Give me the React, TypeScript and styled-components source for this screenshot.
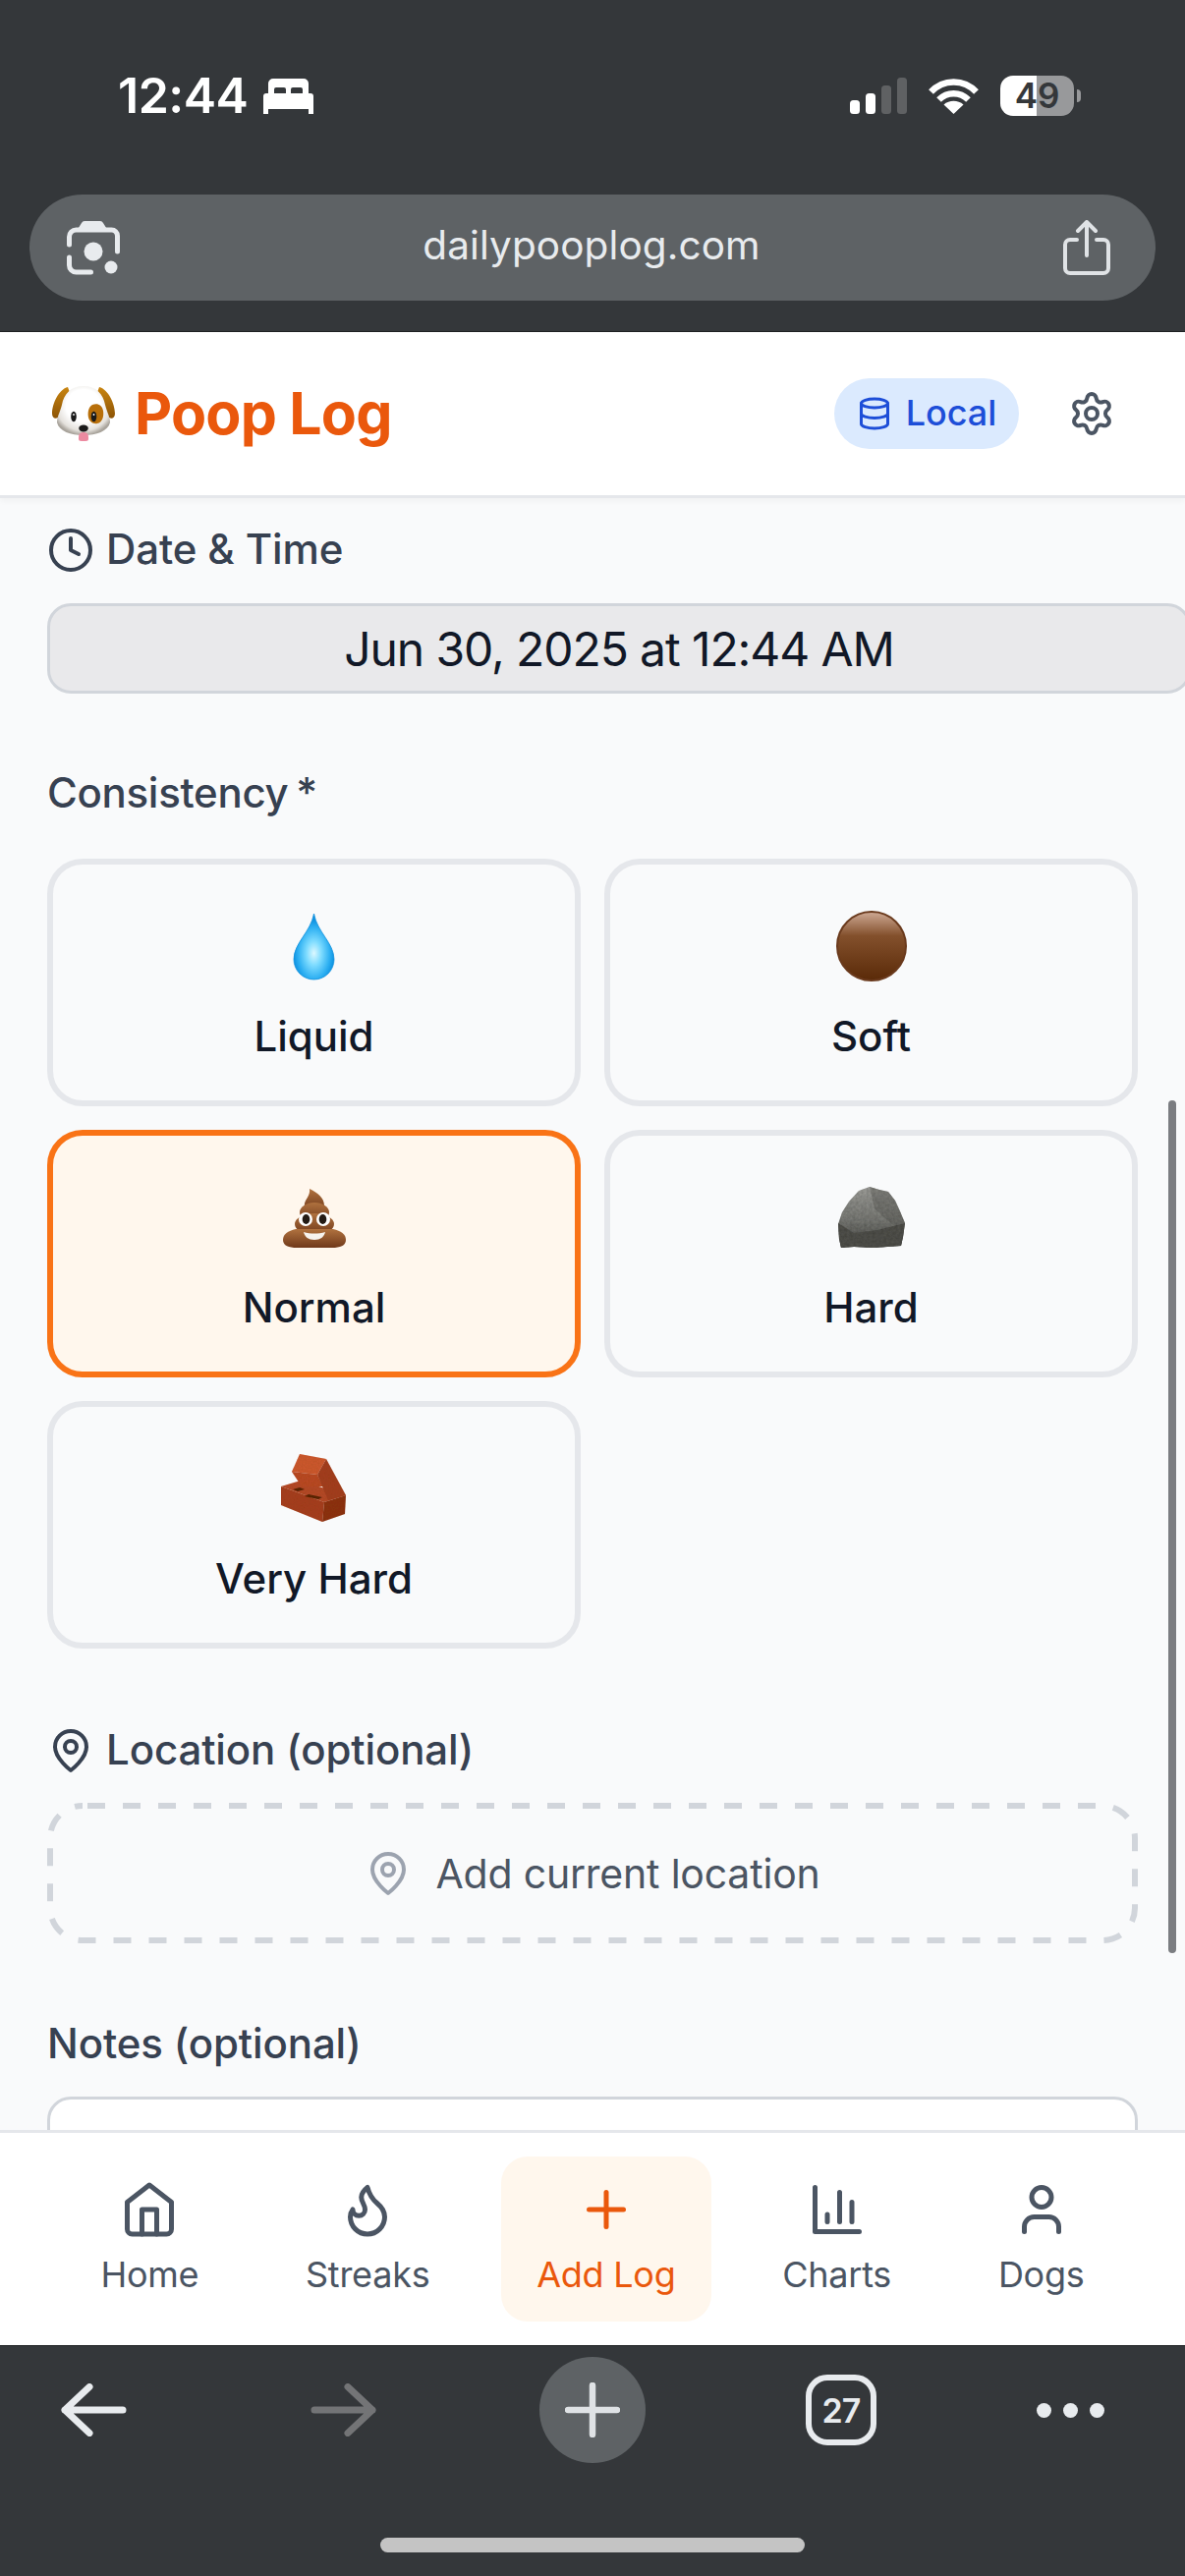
import React from "react";
import styled, { createGlobalStyle } from "styled-components";
import { Clock, Database, Flame, Plus, Settings, User } from "lucide-react";

const Global = createGlobalStyle`
  html, body { margin: 0; padding: 0; background: #34373a; }
  * { box-sizing: border-box; }
  body { font-family: Inter, "Liberation Sans", sans-serif; -webkit-font-smoothing: antialiased; }
`;

const Phone = styled.div`
  width: 1206px; height: 2622px; display: flex; flex-direction: column; overflow: hidden; background: #f9fafb; position: relative;
`;
const TopChrome = styled.div`
  height: 338px; flex: none; background: #34373a; padding-top: 77px; border-bottom: 1px solid #1f2123;
`;
const StatusRow = styled.div`
  height: 41px; display: flex; align-items: center; justify-content: space-between; padding: 0 113px 0 120px;
`;
const StatusLeft = styled.div`display: flex; align-items: center; gap: 16px;`;
const Time = styled.span`font-size: 50px; line-height: 41px; font-weight: 600; color: #fff; letter-spacing: -0.5px;`;
const StatusRight = styled.div`display: flex; align-items: center; gap: 22px;`;
const Battery = styled.div`
  position: relative; width: 75px; height: 41px; border-radius: 13px;
  background: linear-gradient(90deg, #fff 49%, #98999b 49%);
  color: #34373a; font-size: 35px; font-weight: 600; display: flex; align-items: center; justify-content: center; line-height: 41px;
  &::after { content: ""; position: absolute; left: 78px; top: 14px; width: 4px; height: 13px; border-radius: 0 4px 4px 0; background: #98999b; }
`;
const UrlBar = styled.div`
  margin: 80px 30px 0 30px; height: 108px; border-radius: 54px; background: #5e6265;
  display: flex; align-items: center; justify-content: space-between; padding: 0 46px 0 38px;
`;
const UrlText = styled.span`font-size: 40.500px; color: #e8ebee; letter-spacing: 0.1px; margin-bottom: 6px;`;

const Header = styled.header`
  height: 169px; flex: none; background: #fff; border-bottom: 3px solid #e5e7eb; box-shadow: 0 3px 6px rgba(0,0,0,0.04);
  display: flex; align-items: center; justify-content: space-between; padding: 0 71px 0 53px; position: relative; z-index: 1;
`;
const Brand = styled.div`display: flex; align-items: center; gap: 20px;`;
const Title = styled.h1`margin: 0; font-size: 59px; line-height: 72px; font-weight: 700; color: #ea580c; letter-spacing: -0.8px;`;
const HeaderActions = styled.div`display: flex; align-items: center; gap: 50px;`;
const Badge = styled.div`
  height: 72px; width: 188px; border-radius: 36px; background: #dbeafe; color: #1d4ed8;
  display: flex; align-items: center; justify-content: center; gap: 14px; font-size: 36px; font-weight: 500;
`;
const BadgeText = styled.span`margin-bottom: 3px;`;

const Main = styled.main`
  flex: 1; min-height: 0; overflow: hidden; padding: 23px 48px 0; position: relative;
`;
const Label = styled.div<{ $top?: number; $tight?: boolean }>`
  display: flex; align-items: center; gap: 12px; height: 60px; margin-top: ${p => p.$top ?? 0}px;
  font-size: 42px; font-weight: 500; color: #374151; letter-spacing: ${p => (p.$tight ? "-0.3px" : "-0.12px")};
  word-spacing: ${p => (p.$tight ? "-3px" : "0")};
`;
const LabelText = styled.span`margin-bottom: 3px;`;
const DateField = styled.div`
  margin-top: 24px; width: 1164px; height: 92px; border: 3px solid #d1d5db; border-radius: 24px; background: #e9e9eb;
  display: flex; align-items: center; justify-content: center; font-size: 48px; color: #111827; letter-spacing: -1.1px;
`;
const Grid = styled.div`
  margin-top: 36px; display: grid; grid-template-columns: 1fr 1fr; gap: 24px;
`;
const Card = styled.div<{ $on?: boolean }>`
  height: 252px; border: 6px solid ${p => (p.$on ? "#f97316" : "#e5e7eb")}; border-radius: 36px; background: ${p => (p.$on ? "#fff7ed" : "transparent")};
  display: flex; flex-direction: column; align-items: center; padding-top: 47px;
`;
const CardLabel = styled.span`margin-top: 26px; font-size: 42px; line-height: 60px; font-weight: 500; color: #111827;`;
const DashedButton = styled.div`
  position: relative; margin-top: 23px; height: 143px;
  display: flex; align-items: center; justify-content: center; gap: 24px; font-size: 41px; color: #4b5563; letter-spacing: -0.2px;
`;
const DashFrame = styled.svg`position: absolute; left: 0; top: 0;`;
const TextArea = styled.div`
  margin-top: 23px; height: 160px; border: 3px solid #d1d5db; border-radius: 24px; background: #fff;
`;
const ScrollThumb = styled.div`
  position: absolute; left: 1189px; top: 613px; width: 8px; height: 868px; border-radius: 4px; background: #7b7d81;
`;

const Nav = styled.nav`
  flex: none; background: #fff; border-top: 3px solid #e5e7eb; padding: 24px 48px; display: flex; justify-content: space-around; position: relative;
`;
const NavItem = styled.div<{ $on?: boolean }>`
  height: 168px; padding: 24px 36px; border-radius: 27px; display: flex; flex-direction: column; align-items: center; gap: 12px;
  background: ${p => (p.$on ? "#fff7ed" : "transparent")}; color: ${p => (p.$on ? "#ea580c" : "#4b5563")};
`;
const NavLabel = styled.span`font-size: 36px; line-height: 48px; font-weight: 400; letter-spacing: -0.25px;`;

const BottomChrome = styled.div`
  flex: none; height: 235px; background: #34373a; border-top: 1px solid #1f2123; display: flex; flex-direction: column; align-items: center;
`;
const Toolbar = styled.div`
  align-self: stretch; display: flex; align-items: center; height: 108px; margin-top: 11px; padding-left: 62px;
`;
const ToolSlot = styled.div<{ $gap: number }>`
  margin-left: ${p => p.$gap}px; display: flex; align-items: center; justify-content: center; flex: none;
`;
const NewTab = styled.div`
  width: 108px; height: 108px; border-radius: 50%; background: #5e6265; display: flex; align-items: center; justify-content: center;
`;
const Tabs = styled.div`
  width: 72px; height: 72px; border: 6px solid #e8ebee; border-radius: 22px; display: flex; align-items: center; justify-content: center;
  color: #e8ebee; font-size: 34px; font-weight: 600; letter-spacing: -1px;
`;
const Dots = styled.div`display: flex; gap: 12px;`;
const Dot = styled.span`width: 15px; height: 15px; border-radius: 50%; background: #e8ebee;`;
const HomeBar = styled.div`margin-top: 76px; width: 432px; height: 15px; border-radius: 8px; background: #c4c4c4;`;

const Bed = () => (
  <svg width="51" height="36" viewBox="0 0 51 36" fill="#fff">
    <path fillRule="evenodd" d="M5 5a5 5 0 0 1 5-5h31a5 5 0 0 1 5 5v12H5zM11 15v-4a2 2 0 0 1 2-2h8a2 2 0 0 1 2 2v4zM28 15v-4a2 2 0 0 1 2-2h8a2 2 0 0 1 2 2v4z" />
    <path d="M3 15h45a3 3 0 0 1 3 3v13H0V18a3 3 0 0 1 3-3z" />
    <path d="M0 30h5v6H0zM46 30h5v6h-5z" />
  </svg>
);
const Signal = () => (
  <svg width="58" height="37" viewBox="0 0 58 37">
    <rect x="0" y="23" width="10" height="14" rx="3.500" fill="#fff" />
    <rect x="16" y="16" width="10" height="21" rx="3.500" fill="#fff" />
    <rect x="32" y="8" width="10" height="29" rx="3.500" fill="#5f6163" />
    <rect x="48" y="0" width="10" height="37" rx="3.500" fill="#5f6163" />
  </svg>
);
const Wifi = () => (
  <svg width="51" height="37" viewBox="0 0 51 37" fill="none" stroke="#fff" strokeWidth="6.500">
    <path d="M2.500 14.500C15 1 36 1 48.500 14.500" />
    <path d="M10.500 22.500C19 14 32 14 40.500 22.500" />
    <path d="M25.500 37L15.500 27.500C21 22.500 30 22.500 35.500 27.500Z" fill="#fff" stroke="none" />
  </svg>
);
const Lens = () => (
  <svg width="54" height="55" viewBox="0 0 54 55" fill="none" stroke="#e8ebee" strokeWidth="5" strokeLinecap="round">
    <path d="M2.500 24v-8a7 7 0 0 1 7-7h36a6 6 0 0 1 6 6v16" />
    <path d="M2.500 37v8a7 7 0 0 0 7 7h15" />
    <path d="M10 10l5-8q1-2 3-2h16q2 0 3 2l5 8z" fill="#e8ebee" stroke="none" />
    <circle cx="27" cy="31" r="9.500" fill="#e8ebee" stroke="none" />
    <circle cx="45" cy="47" r="6.500" fill="#e8ebee" stroke="none" />
  </svg>
);
const Share = () => (
  <svg width="48" height="56" viewBox="0 0 48 56" fill="none" stroke="#e0e3e6" strokeWidth="4" strokeLinecap="round" strokeLinejoin="round">
    <path d="M24 36V3M15 11l9-9 9 9" />
    <path d="M14 20H7a5 5 0 0 0-5 5v24a5 5 0 0 0 5 5h34a5 5 0 0 0 5-5V25a5 5 0 0 0-5-5h-7" />
  </svg>
);
const Arrow = ({ flip, color }: { flip?: boolean; color: string }) => (
  <svg width="67" height="54" viewBox="0 0 67 54" fill="none" stroke={color} strokeWidth="7" strokeLinecap="round" strokeLinejoin="round">
    <g transform={flip ? "translate(67 0) scale(-1 1)" : undefined}>
      <path d="M4 27H63M29 3.500L4 27L29 50.500" />
    </g>
  </svg>
);
const LargePlus = () => (
  <svg width="56" height="56" viewBox="0 0 56 56" fill="none" stroke="#dfe2e5" strokeWidth="6.500" strokeLinecap="round">
    <path d="M28 3V53M3 28H53" />
  </svg>
);

const Line = { fill: "none", stroke: "currentColor", strokeWidth: 2, strokeLinecap: "round", strokeLinejoin: "round" } as const;
const OldHome = () => (
  <svg width="60" height="60" viewBox="0 0 24 24" {...Line}>
    <path d="m3 9 9-7 9 7v11a2 2 0 0 1-2 2H5a2 2 0 0 1-2-2z" />
    <polyline points="9 22 9 12 15 12 15 22" />
  </svg>
);
const OldChart = () => (
  <svg width="60" height="60" viewBox="0 0 24 24" {...Line}>
    <path d="M3 3v18h18M18 17V9M13 17V5M8 17v-3" />
  </svg>
);
const Pin = ({ color }: { color: string }) => (
  <svg width="48" height="48" viewBox="0 0 24 24" {...Line} style={{ color }}>
    <path d="M20 10c0 6-8 12-8 12s-8-6-8-12a8 8 0 0 1 16 0Z" />
    <circle cx="12" cy="10" r="3" />
  </svg>
);

const DogFace = () => (
  <svg width="64" height="56" viewBox="0 0 64 56">
    <defs>
      <radialGradient id="dogHead" cx="0.5" cy="0.4" r="0.6">
        <stop offset="0.55" stopColor="#ffffff" />
        <stop offset="0.85" stopColor="#e4e1dc" />
        <stop offset="1" stopColor="#a9a49c" />
      </radialGradient>
      <linearGradient id="dogEar" x1="0" y1="0" x2="0" y2="1">
        <stop offset="0" stopColor="#c98510" />
        <stop offset="1" stopColor="#8c5305" />
      </linearGradient>
    </defs>
    <path d="M16 1C7 3 0 18 0 28c0 4 3 6 6 4 6-3 11-12 14-20z" fill="url(#dogEar)" />
    <path d="M48 1c9 2 16 17 16 27 0 4-3 6-6 4-6-3-11-12-14-20z" fill="url(#dogEar)" />
    <path d="M32 0c13 0 20 8 22 19 2 8 5 12 5 18-2 9-14 13-27 13S7 46 5 37c0-6 3-10 5-18C12 8 19 0 32 0z" fill="url(#dogHead)" />
    <path d="M41 19c5-2 10 0 11 6 1 6-1 12-6 13-4 1-8-2-9-6-1-5 0-11 4-13z" fill="#b86f0a" />
    <ellipse cx="22" cy="31" rx="2.800" ry="5.200" fill="#1a1a1a" />
    <ellipse cx="42.500" cy="31" rx="2.800" ry="5.200" fill="#1a1a1a" />
    <circle cx="22" cy="29" r="0.900" fill="#fff" />
    <circle cx="42.500" cy="29" r="0.900" fill="#fff" />
    <path d="M27 54c0-4 0-7 5-7s5 3 5 7c0 2-2 2-5 2s-5 0-5-2z" fill="#ec8aa0" />
    <ellipse cx="32" cy="43" rx="4.800" ry="3.400" fill="#1b1b1b" />
  </svg>
);
const Drop = () => (
  <svg width="72" height="72" viewBox="0 0 72 72">
    <defs>
      <radialGradient id="dropFill" cx="0.5" cy="0.6" r="0.52">
        <stop offset="0" stopColor="#dcf8ff" />
        <stop offset="0.35" stopColor="#7fdcff" />
        <stop offset="0.75" stopColor="#2eb0f2" />
        <stop offset="1" stopColor="#0a8fe0" />
      </radialGradient>
    </defs>
    <path d="M35.500 3C39 22 56 33 56 49.500a20.500 20.500 0 0 1-41 0C15 33 32 22 35.500 3z" fill="url(#dropFill)" stroke="#0f8fdc" strokeWidth="0.800" />
  </svg>
);
const Ball = () => (
  <svg width="72" height="72" viewBox="0 0 72 72">
    <defs>
      <linearGradient id="ballFill" x1="0" y1="0" x2="0" y2="1">
        <stop offset="0.03" stopColor="#c8a28c" />
        <stop offset="0.35" stopColor="#83502c" />
        <stop offset="1" stopColor="#5a2a08" />
      </linearGradient>
    </defs>
    <circle cx="36" cy="36" r="35" fill="url(#ballFill)" stroke="#6a3a1d" strokeWidth="2" />
  </svg>
);
const Poo = () => (
  <svg width="72" height="72" viewBox="0 0 72 72">
    <defs>
      <linearGradient id="pooFill" x1="0" y1="0" x2="0" y2="1">
        <stop offset="0" stopColor="#b0723f" />
        <stop offset="1" stopColor="#70391a" />
      </linearGradient>
    </defs>
    <g fill="url(#pooFill)">
      <path d="M31 7c8 4 15 9 15 17 0 4-5 6-10 6-7 0-11-3-10-8 1-5 6-8 5-15z" />
      <ellipse cx="36" cy="31" rx="15" ry="10" />
      <ellipse cx="36" cy="43" rx="20" ry="11" />
      <path d="M17 48c-8 2-13 5-13 11 0 6 6 8 14 8h36c8 0 14-2 14-8 0-6-5-9-13-11z" />
    </g>
    <path d="M25 51c7 2 15 2 22 0-1 5-5 8-11 8s-10-3-11-8z" fill="#f7f3ee" />
    <circle cx="27" cy="38" r="7" fill="#fff" />
    <circle cx="45" cy="38" r="7" fill="#fff" />
    <ellipse cx="27.500" cy="38" rx="3.800" ry="5" fill="#231a14" />
    <ellipse cx="44.500" cy="38" rx="3.800" ry="5" fill="#231a14" />
  </svg>
);
const Rock = () => (
  <svg width="72" height="72" viewBox="0 0 72 72">
    <defs>
      <filter id="rockGrain" x="0" y="0" width="100%" height="100%">
        <feTurbulence type="fractalNoise" baseFrequency="0.35" numOctaves="3" seed="4" />
        <feColorMatrix values="0 0 0 0 0  0 0 0 0 0  0 0 0 0 0  0 0 0 0.45 0" />
        <feComposite in2="SourceGraphic" operator="in" result="grain" />
        <feMerge><feMergeNode in="SourceGraphic" /><feMergeNode in="grain" /></feMerge>
      </filter>
      <linearGradient id="rockFill" x1="0" y1="0" x2="0" y2="1">
        <stop offset="0" stopColor="#a5a5a0" />
        <stop offset="0.55" stopColor="#7d7e79" />
        <stop offset="1" stopColor="#4a4b47" />
      </linearGradient>
    </defs>
    <g filter="url(#rockGrain)">
      <path d="M34 5l10 3 9 2 7 9 5 11 5 12-2 14-2 9-14 1-14 1-20-1-13 1-2-9-1-15 4-12 7-11 10-11z" fill="url(#rockFill)" />
      <path d="M2 42l16 10 24-3 28-7-2 14-2 9-14 1-14 1-20-1-13 1-2-9z" fill="#54544f" />
      <path d="M34 5l5 22 11 10 8 7 12-2-5-12-5-11-7-9-9-2z" fill="#5f605b" opacity="0.45" />
    </g>
  </svg>
);
const Brick = () => (
  <svg width="72" height="72" viewBox="0 0 72 72">
    <defs>
      <filter id="brickGrain" x="0" y="0" width="100%" height="100%">
        <feTurbulence type="fractalNoise" baseFrequency="0.6" numOctaves="2" seed="7" />
        <feColorMatrix values="0 0 0 0 0.2  0 0 0 0 0.05  0 0 0 0 0  0 0 0 0.35 0" />
        <feComposite in2="SourceGraphic" operator="in" result="grain" />
        <feMerge><feMergeNode in="SourceGraphic" /><feMergeNode in="grain" /></feMerge>
      </filter>
    </defs>
    <g filter="url(#brickGrain)">
      <path d="M2 34l20-6 46 15-22 7z" fill="#b8492a" />
      <path d="M2 34l44 16-2 20L2 53z" fill="#a83c20" />
      <path d="M46 50l22-7-1 19-23 8z" fill="#8c2f18" />
      <path d="M21 1l27 5-9 16-26-3z" fill="#d25a33" />
      <path d="M13 19l26 3 6 12-22 0z" fill="#bd4a28" />
      <path d="M48 6l20 37-18 5-11-26z" fill="#a53d20" />
      <path d="M14 37l7-2 5 2-7 2zM30 42l14 3-4 2-14-3z" fill="#4f1c0e" />
    </g>
  </svg>
);

const options = [
  { label: "Liquid", art: <Drop /> },
  { label: "Soft", art: <Ball /> },
  { label: "Normal", art: <Poo />, on: true },
  { label: "Hard", art: <Rock /> },
  { label: "Very Hard", art: <Brick /> },
];

export default function App() {
  return (
    <Phone>
      <Global />
      <TopChrome>
        <StatusRow>
          <StatusLeft>
            <Time>12:44</Time>
            <Bed />
          </StatusLeft>
          <StatusRight>
            <Signal />
            <Wifi />
            <Battery>49</Battery>
          </StatusRight>
        </StatusRow>
        <UrlBar>
          <Lens />
          <UrlText>dailypooplog.com</UrlText>
          <Share />
        </UrlBar>
      </TopChrome>
      <Header>
        <Brand>
          <DogFace />
          <Title>Poop Log</Title>
        </Brand>
        <HeaderActions>
          <Badge>
            <Database size={36} strokeWidth={2} />
            <BadgeText>Local</BadgeText>
          </Badge>
          <Settings size={48} strokeWidth={2} color="#4b5563" />
        </HeaderActions>
      </Header>
      <Main>
        <Label>
          <Clock size={48} strokeWidth={2} />
          <LabelText>Date &amp; Time</LabelText>
        </Label>
        <DateField>Jun 30, 2025 at 12:44 AM</DateField>
        <Label $top={72} $tight><LabelText>Consistency *</LabelText></Label>
        <Grid>
          {options.map(o => (
            <Card key={o.label} $on={o.on}>
              {o.art}
              <CardLabel>{o.label}</CardLabel>
            </Card>
          ))}
        </Grid>
        <Label $top={74}>
          <Pin color="#374151" />
          <LabelText>Location (optional)</LabelText>
        </Label>
        <DashedButton>
          <DashFrame width="1110" height="143" viewBox="0 0 1110 143" fill="none">
            <rect x="3" y="3" width="1104" height="137" rx="33" stroke="#d1d5db" strokeWidth="6" strokeDasharray="18 18" strokeDashoffset="-5" />
          </DashFrame>
          <Pin color="#9ca3af" />
          Add current location
        </DashedButton>
        <Label $top={73}><LabelText>Notes (optional)</LabelText></Label>
        <TextArea />
        <ScrollThumb />
      </Main>
      <Nav>
        <NavItem><OldHome /><NavLabel>Home</NavLabel></NavItem>
        <NavItem><Flame size={60} strokeWidth={2} /><NavLabel>Streaks</NavLabel></NavItem>
        <NavItem $on><Plus size={60} strokeWidth={2} /><NavLabel>Add Log</NavLabel></NavItem>
        <NavItem><OldChart /><NavLabel>Charts</NavLabel></NavItem>
        <NavItem><User size={60} strokeWidth={2} /><NavLabel>Dogs</NavLabel></NavItem>
      </Nav>
      <BottomChrome>
        <Toolbar>
          <ToolSlot $gap={0}><Arrow color="#e8ebee" /></ToolSlot>
          <ToolSlot $gap={187}><Arrow flip color="#737476" /></ToolSlot>
          <ToolSlot $gap={166}><NewTab><LargePlus /></NewTab></ToolSlot>
          <ToolSlot $gap={163}><Tabs>27</Tabs></ToolSlot>
          <ToolSlot $gap={163}><Dots><Dot /><Dot /><Dot /></Dots></ToolSlot>
        </Toolbar>
        <HomeBar />
      </BottomChrome>
    </Phone>
  );
}
